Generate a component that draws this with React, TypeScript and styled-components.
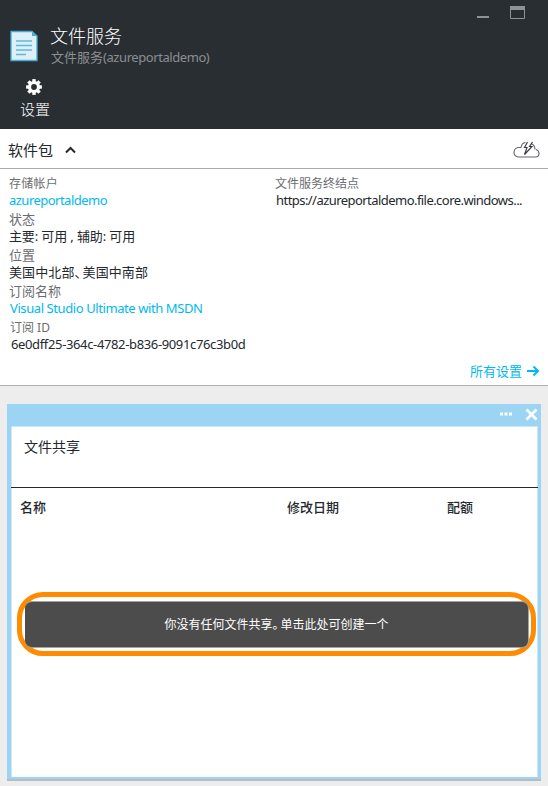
import React from "react";
import styled, { createGlobalStyle } from "styled-components";

const GlobalStyle = createGlobalStyle`
  * { box-sizing: border-box; }
  body {
    margin: 0;
    background: #ededed;
    font-family: "Noto Sans", "Noto Sans CJK SC", sans-serif;
    color: #24282d;
  }
`;

const Blade = styled.div`
  width: 548px;
  height: 786px;
  display: flex;
  flex-direction: column;
  overflow: hidden;
  background: #ededed;
`;

const Text = styled.span<{ $size?: number; $color?: string; $gap?: number; $weight?: number; $line?: number; $height?: number; $indent?: number }>`
  display: block;
  white-space: pre;
  font-size: ${(p) => p.$size ?? 13}px;
  line-height: ${(p) => p.$line ?? 18}px;
  height: ${(p) => p.$height ?? p.$line ?? 18}px;
  color: ${(p) => p.$color ?? "#24282d"};
  letter-spacing: ${(p) => p.$gap ?? 0}px;
  font-weight: ${(p) => p.$weight ?? 400};
  padding-left: ${(p) => p.$indent ?? 0}px;
`;

const Label = styled(Text).attrs({ $height: 18 })`
  color: #6b6d70;
`;

const Value = styled(Text).attrs({ $line: 16, $height: 18 })``;

const Latin = styled.span<{ $gap: number }>`
  letter-spacing: ${(p) => p.$gap}px;
`;

const Half = styled.span<{ $gap?: number }>`
  font-feature-settings: "halt";
  letter-spacing: ${(p) => p.$gap ?? 0}px;
`;

const Header = styled.header`
  height: 129px;
  flex: none;
  background: #292e32;
  display: flex;
  flex-direction: column;
`;

const WindowControls = styled.div`
  height: 24px;
  padding: 6px 23px 0 0;
  display: flex;
  justify-content: flex-end;
  gap: 21px;
`;

const TitleRow = styled.div`
  display: flex;
  height: 52px;
  padding-left: 10px;
  gap: 12px;
`;

const DocIcon = styled.svg`
  margin-top: 6px;
  flex: none;
`;

const Titles = styled.div`
  display: flex;
  flex-direction: column;
`;

const Command = styled.button`
  width: 60px;
  margin-left: 5px;
  padding: 3px 0 0;
  border: 0;
  background: none;
  font-family: inherit;
  display: flex;
  flex-direction: column;
  align-items: center;
  gap: 3px;
`;

const Gear = styled.svg`
  margin-right: 3px;
`;

const EssentialsBar = styled.div`
  height: 40px;
  flex: none;
  background: #fff;
  border-bottom: 1px solid #aaa;
  padding: 2px 8px 0 8px;
  display: flex;
  align-items: center;
`;

const Chevron = styled.svg`
  margin-left: 12px;
`;

const Cloud = styled.svg`
  margin-left: auto;
  margin-top: 1px;
`;

const Essentials = styled.section`
  height: 217px;
  flex: none;
  background: #fff;
  border-bottom: 1px solid #b0b0b0;
  padding-top: 5px;
  display: flex;
  flex-direction: column;
`;

const Columns = styled.div`
  display: grid;
  grid-template-columns: 266px 1fr;
  padding-left: 9px;
  height: 188px;
`;

const AllSettings = styled.a`
  display: flex;
  align-items: center;
  justify-content: flex-end;
  gap: 4px;
  padding-right: 8px;
`;

const Panel = styled.section`
  margin: 18px 7px 0;
  width: 534px;
  height: 377px;
  flex: none;
  background: #9cd4f3;
  border-bottom: 2px solid #b7bcc0;
  padding: 0 3px 2px 4px;
  display: flex;
  flex-direction: column;
`;

const PanelBar = styled.div`
  height: 22px;
  flex: none;
  display: flex;
  justify-content: flex-end;
  gap: 12px;
`;

const PanelBody = styled.div`
  flex: 1;
  background: #fff;
  border: 1px solid #c8e8f9;
  border-width: 1px 1px 0;
`;

const PanelTitle = styled.div`
  height: 61px;
  margin: 0 -1px;
  border-bottom: 1px solid #24282d;
  padding: 10px 0 0 13px;
`;

const TableHead = styled.div`
  display: grid;
  grid-template-columns: 267px 160px 1fr;
  padding: 10px 0 0 8px;
  height: 104px;
`;

const Ring = styled.div`
  width: 519px;
  height: 64px;
  margin-left: 5px;
  border: 5px solid #ff8c00;
  border-radius: 26px;
  padding: 4px 2px 3px 3px;
`;

const EmptyNotice = styled.button`
  width: 504px;
  height: 47px;
  padding: 1px 0 0;
  border: 1px solid #a3a3a3;
  border-left: 0;
  border-radius: 7px;
  background: #4c4c4c;
  font-family: inherit;
  display: flex;
  justify-content: center;
  align-items: center;
`;

const link = "#00b9f0";

export default function App() {
  return (
    <>
      <GlobalStyle />
      <Blade>
        <Header>
          <WindowControls>
            <svg width="12" height="13"><rect y="10" width="12" height="2" fill="#8f9294" /></svg>
            <svg width="15" height="13"><path d="M.5.5h14v12H.5z" fill="none" stroke="#8f9294" /><rect width="15" height="4" fill="#8f9294" /></svg>
          </WindowControls>
          <TitleRow>
            <DocIcon width="28" height="32" viewBox="0 0 28 32">
              <path d="M1 1.500H22L27 6V30.500H1z" fill="#ddf0f8" stroke="#48acd3" strokeWidth="1.300" />
              <path d="M22 1l5.500 5H22z" fill="#48acd3" />
              <path d="M6 11h16M6 15.500h16M6 20h16M6 24.500h10" stroke="#62b6da" strokeWidth="1.500" />
            </DocIcon>
            <Titles>
              <Text $size={18} $line={24} $weight={300} $color="#fff">文件服务</Text>
              <Text $color="#8b8f92" $indent={1}>文件服务<Latin $gap={-0.43}>(azureportaldemo)</Latin></Text>
            </Titles>
          </TitleRow>
          <Command>
            <Gear width="16" height="16" viewBox="-8 -8 16 16">
              <circle r="4.500" fill="none" stroke="#fff" strokeWidth="3.200" />
              {[0, 45, 90, 135, 180, 225, 270, 315].map((a) => (
                <rect key={a} x="-1.700" y="-7.900" width="3.400" height="3" fill="#fff" transform={`rotate(${a})`} />
              ))}
            </Gear>
            <Text $size={15} $line={22} $weight={300} $color="#fff">设置</Text>
          </Command>
        </Header>
        <EssentialsBar>
          <Text $size={15} $line={22}>软件包</Text>
          <Chevron width="11" height="8" viewBox="0 0 11 8"><path d="M1 6.500L5.500 2 10 6.500" fill="none" stroke="#24282d" strokeWidth="2" /></Chevron>
          <Cloud width="27" height="18" viewBox="0 0 27 18">
            <path d="M12 16H5.500C2.700 16 1 14 1 11.500S3 7 5 6.500h3C8.500 3.500 10 1.800 12.500 1.500M18 2.500c2.500 1 4 3.500 4 6M23 8.500c1.500.5 3 2 3 4S24.500 16 22.500 16H10" fill="none" stroke="#66666c" strokeWidth="1.100" />
            <path d="M14.500 1L11.500 6.500H14L11.500 13.500 19 5.500H16.500L19.500 1" fill="none" stroke="#35353f" strokeWidth="1.100" />
          </Cloud>
        </EssentialsBar>
        <Essentials>
          <Columns>
            <div>
              <Label $size={12} $line={19} $gap={0.25}>存储帐户</Label>
              <Value $color={link} $gap={-0.52}>azureportaldemo</Value>
              <Label>状态</Label>
              <Value $gap={-0.13}>主要: 可用 , 辅助: 可用</Value>
              <Label>位置</Label>
              <Value $gap={0.1}>美国中北部<Half $gap={1.5}>、</Half>美国中南部</Value>
              <Label>订阅名称</Label>
              <Value $color={link} $gap={-0.41} $indent={1}>Visual Studio Ultimate with MSDN</Value>
              <Label $size={12} $line={20} $indent={1}>订阅 ID</Label>
              <Value $gap={-0.36} $indent={2}>6e0dff25-364c-4782-b836-9091c76c3b0d</Value>
            </div>
            <div>
              <Label $size={12} $line={20}>文件服务终结点</Label>
              <Value $gap={-0.55} $indent={1}>https://azureportaldemo.file.core.windows...</Value>
            </div>
          </Columns>
          <AllSettings>
            <Text $color={link}>所有设置</Text>
            <svg width="14" height="12" viewBox="0 0 14 12"><path d="M1 6h11M7.500 1.500L12 6l-4.500 4.500" fill="none" stroke={link} strokeWidth="2" /></svg>
          </AllSettings>
        </Essentials>
        <Panel>
          <PanelBar>
            <svg width="14" height="22"><path d="M1 8.500h3v3H1zM5.500 8.500h3v3h-3zM10 8.500h3v3h-3z" fill="#fff" /></svg>
            <svg width="13" height="22"><path d="M1.500 5.500l10 10M11.500 5.500l-10 10" stroke="#fff" strokeWidth="2.600" /></svg>
          </PanelBar>
          <PanelBody>
            <PanelTitle><Text $size={14} $line={20}>文件共享</Text></PanelTitle>
            <TableHead>
              <Text $weight={500}>名称</Text>
              <Text $weight={500}>修改日期</Text>
              <Text $weight={500}>配额</Text>
            </TableHead>
            <Ring>
              <EmptyNotice>
                <Text $size={12} $color="#fff">你没有任何文件共享<Half $gap={2}>。</Half>单击此处可创建一个</Text>
              </EmptyNotice>
            </Ring>
          </PanelBody>
        </Panel>
      </Blade>
    </>
  );
}
